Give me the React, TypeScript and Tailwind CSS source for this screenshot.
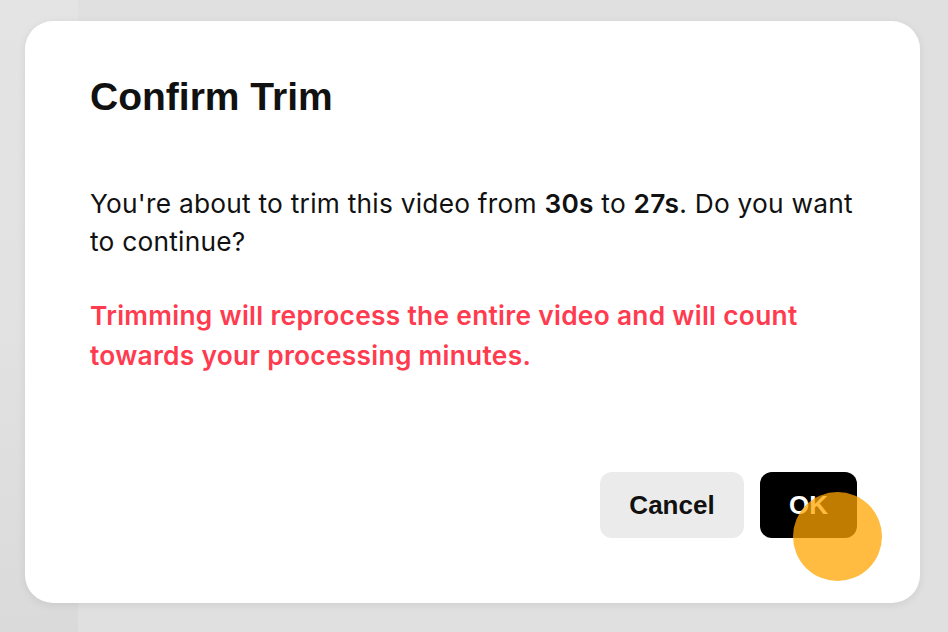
export default function App() {
  return (
    <div className="relative h-[632px] w-full overflow-hidden bg-[#e0e0e0]">
      {/* page behind the modal */}
      <div className="absolute inset-y-0 left-0 w-[78px] bg-gradient-to-b from-[#e4e4e4] via-[#e2e2e2] to-[#dadada]" />

      <div className="relative flex pl-[25px] pt-[21px]">
        <div className="flex h-[582px] w-[895px] flex-col rounded-[28px] bg-white pb-[65px] pl-[65px] pr-[63px] pt-[52px] shadow-[0_2px_8px_rgba(0,0,0,0.08)]">
          <h2 className="font-['Liberation_Sans',Arial,sans-serif] text-[39px] font-bold leading-[48px] text-[#111111]">
            Confirm Trim
          </h2>

          <p className="mt-[64px] font-['Inter',sans-serif] text-[26.3px] leading-[38px] tracking-[0.24px] text-[#111111]">
            You're about to trim this video from <span className="font-semibold">30s</span> to{' '}
            <span className="font-semibold">27s</span>. Do you want to continue?
          </p>

          <p className="mt-[35px] font-['Inter',sans-serif] text-[26.3px] font-semibold leading-[40px] tracking-[0.3px] text-[#ff3b4f]">
            Trimming will reprocess the entire video and will count towards your processing minutes.
          </p>

          <div className="mt-auto flex justify-end gap-4">
            <button className="h-[66px] w-[144px] rounded-[12px] bg-[#ebebeb] font-['Liberation_Sans',Arial,sans-serif] text-[26px] font-bold text-[#111111]">
              Cancel
            </button>
            <button className="relative h-[66px] w-[97px] rounded-[12px] bg-black font-['Liberation_Sans',Arial,sans-serif] text-[26px] font-bold text-white">
              OK
              {/* click indicator */}
              <span className="pointer-events-none absolute left-[33px] top-[20px] h-[89px] w-[89px] rounded-full bg-[#ffa500]/75" />
            </button>
          </div>
        </div>
      </div>
    </div>
  );
}
